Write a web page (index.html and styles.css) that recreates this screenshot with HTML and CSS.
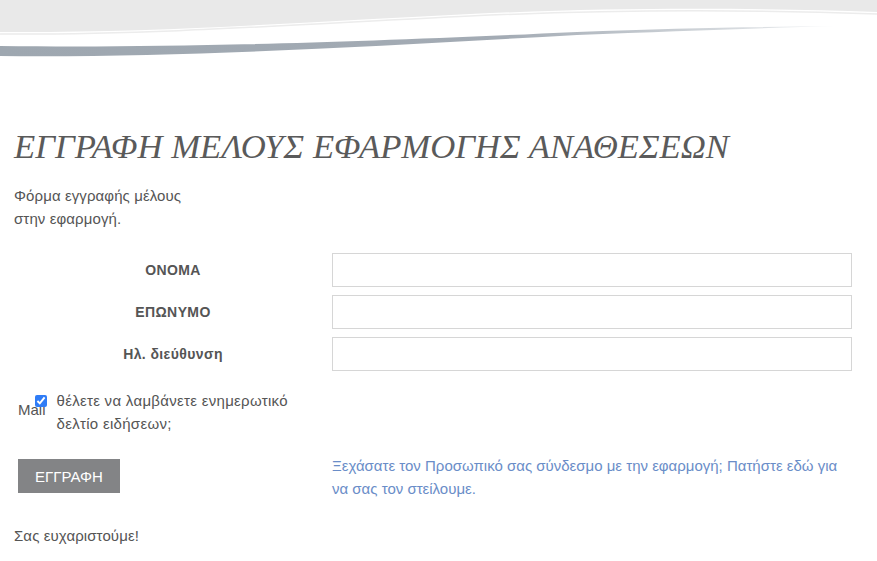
FILE: index.html
```html
<!DOCTYPE html>
<html lang="el">
<head>
<meta charset="utf-8">
<title>Εγγραφή μέλους</title>
<link rel="stylesheet" href="styles.css">
</head>
<body>
<header class="top">
  <svg class="wave" width="877" height="60" viewBox="0 0 877 60" xmlns="http://www.w3.org/2000/svg">
    <defs>
      <linearGradient id="sw" x1="0" y1="0" x2="1" y2="0">
        <stop offset="0" stop-color="#9ea7b0"/>
        <stop offset="0.6" stop-color="#a3abb4"/>
        <stop offset="0.95" stop-color="#e4e7ea"/>
        <stop offset="1" stop-color="#ffffff"/>
      </linearGradient>
    </defs>
    <path d="M0,0 H877 V12 C760,8 620,7 470,14 C320,21 160,33 0,32 Z" fill="#e9e9e9"/>
    <path d="M0,34 C160,35 320,23 470,16 C620,9 760,10 877,14" fill="none" stroke="#ececec" stroke-width="1.5"/>
    <path d="M0,46 C150,48 320,44 577,32 C680,28 760,27 840,26 C760,28 680,31 577,35 C380,46 180,58 0,56 Z" fill="url(#sw)"/>
  </svg>
</header>
<main class="content">
  <h1 class="title">ΕΓΓΡΑΦΗ ΜΕΛΟΥΣ ΕΦΑΡΜΟΓΗΣ ΑΝΑΘΕΣΕΩΝ</h1>
  <p class="intro">Φόρμα εγγραφής μέλους στην εφαρμογή.</p>
  <form class="form">
    <label class="lbl" for="f1">ΟΝΟΜΑ</label>
    <input class="field" id="f1" type="text">
    <label class="lbl" for="f2">ΕΠΩΝΥΜΟ</label>
    <input class="field" id="f2" type="text">
    <label class="lbl" for="f3">Ηλ. διεύθυνση</label>
    <input class="field" id="f3" type="text">
    <div class="mailrow">
      <span class="mail">Mail</span>
      <input class="chk" type="checkbox" checked>
      <span class="chktext">θέλετε να λαμβάνετε ενημερωτικό δελτίο ειδήσεων;</span>
    </div>
    <div class="btncell"><button class="btn" type="button">ΕΓΓΡΑΦΗ</button></div>
    <a class="forgot" href="#">Ξεχάσατε τον Προσωπικό σας σύνδεσμο με την εφαρμογή; Πατήστε εδώ για να σας τον στείλουμε.</a>
  </form>
  <p class="thanks">Σας ευχαριστούμε!</p>
</main>
</body>
</html>
```
FILE: styles.css
```css
html, body {
  margin: 0;
  padding: 0;
  background: #ffffff;
}
body {
  font-family: "Liberation Sans", Arial, sans-serif;
  font-size: 15px;
  color: #555555;
  width: 877px;
  overflow: hidden;
}
.top {
  height: 60px;
}
.wave {
  display: block;
}
.content {
  padding: 0 0 0 14px;
}
.title {
  margin: 68px 0 0 0;
  font-family: "Liberation Serif", "Times New Roman", serif;
  font-style: italic;
  font-weight: normal;
  font-size: 34.7px;
  line-height: 38px;
  color: #5a5a5a;
}
.intro {
  margin: 18px 0 0 0;
  width: 185px;
  line-height: 23px;
  letter-spacing: 0.1px;
}
.form {
  display: grid;
  grid-template-columns: 318px 520px;
  row-gap: 8px;
  margin-top: 23px;
  align-items: center;
}
.lbl {
  text-align: center;
  font-weight: bold;
  font-size: 14px;
  letter-spacing: 0.4px;
  color: #555555;
}
.field {
  box-sizing: border-box;
  height: 34px;
  width: 520px;
  margin: 0;
  border: 1px solid #d6d6d6;
  background: #ffffff;
  outline: none;
}
.mailrow {
  grid-column: 1 / 3;
  display: flex;
  align-items: flex-start;
  margin-top: 10px;
  padding-left: 4px;
}
.mail {
  align-self: flex-end;
  margin-bottom: 17px;
  line-height: 16px;
}
.chk {
  width: 12px;
  height: 12px;
  margin: 6px 0 0 0;
  accent-color: #2f7cf6;
  position: relative;
  left: -11px;
}
.chktext {
  width: 240px;
  font-size: 15px;
  letter-spacing: 0.3px;
  line-height: 23px;
  margin-left: -1px;
}
.btncell {
  align-self: start;
  padding-left: 4px;
  margin-top: 16px;
}
.btn {
  width: 102px;
  height: 34px;
  background: #838486;
  color: #ffffff;
  border: none;
  font-family: "Liberation Sans", Arial, sans-serif;
  font-size: 15px;
  padding: 0;
  border-radius: 0;
}
.forgot {
  align-self: start;
  margin-top: 11px;
  width: 515px;
  color: #6a8dc8;
  text-decoration: none;
  line-height: 23px;
}
.thanks {
  margin: 26px 0 0 0;
  line-height: 20px;
  letter-spacing: 0.1px;
}
```
